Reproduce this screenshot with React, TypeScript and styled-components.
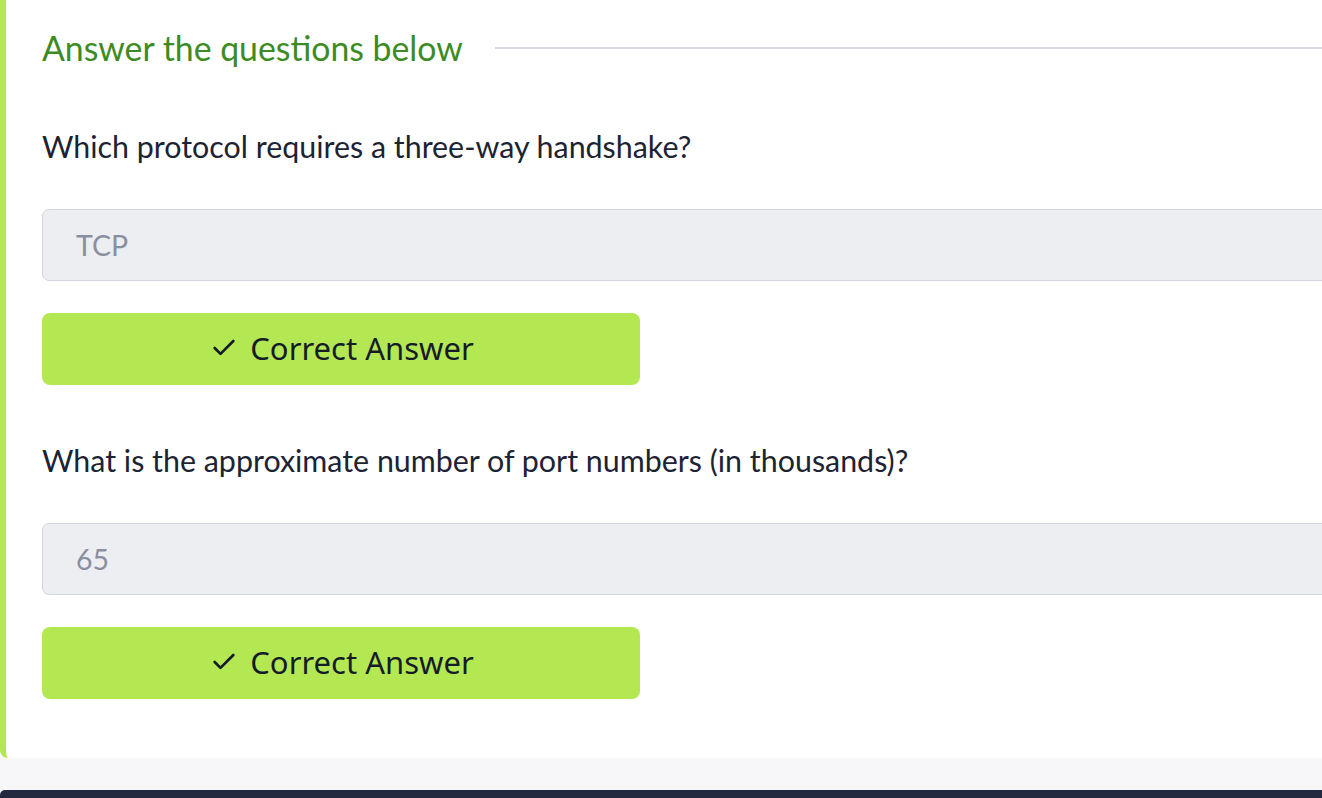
import React from "react";
import styled, { createGlobalStyle } from "styled-components";

const Global = createGlobalStyle`
  html, body { margin: 0; padding: 0; background: #f7f7f9; }
  body { font-family: "Lato", "Liberation Sans", sans-serif; overflow: hidden; }
  * { box-sizing: border-box; }
`;

const Page = styled.div`
  width: 1322px;
  height: 798px;
  display: flex;
  flex-direction: column;
  background: #f7f7f9;
  overflow: hidden;
`;

const Card = styled.section`
  background: #ffffff;
  border-left: 6px solid #b3e852;
  border-bottom-left-radius: 8px;
  padding: 24px 0 59px 36px;
  width: 1400px;
  display: flex;
  flex-direction: column;
`;

const HeadingRow = styled.div`
  display: flex;
  align-items: center;
  gap: 32px;
  height: 48px;
`;

const Heading = styled.h2`
  margin: 0;
  font-family: "Lato", sans-serif;
  font-weight: 400;
  font-size: 33.8px;
  line-height: 48px;
  color: #3d8b22;
  white-space: nowrap;
`;

const Rule = styled.div`
  flex: 1;
  height: 2px;
  background: #d8dae0;
`;

const Question = styled.div<{ $first?: boolean }>`
  margin-top: ${(p) => (p.$first ? 54 : 55)}px;
  font-family: "Lato", sans-serif;
  font-size: 30.4px;
  line-height: 40px;
  color: #1c2333;
  white-space: nowrap;
`;

const AnswerInput = styled.div`
  margin-top: 43px;
  height: 72px;
  background: #edeef2;
  border: 1.5px solid #d3d5dc;
  border-radius: 7px;
  padding-left: 33px;
  display: flex;
  align-items: center;
  font-family: "Lato", sans-serif;
  font-size: 28.5px;
  color: #8a8f9f;
`;

const Button = styled.button`
  margin-top: 32px;
  width: 598px;
  height: 72px;
  border: none;
  border-radius: 8px;
  background: #b3e852;
  display: flex;
  align-items: center;
  justify-content: center;
  gap: 12px;
  font-family: "Noto Sans", "Open Sans", sans-serif;
  font-size: 31px;
  color: #151b28;
  padding: 0 0 2px 2px;
  cursor: pointer;
`;

const Spacer = styled.div`
  height: 32px;
`;

const Footer = styled.footer`
  flex: 1;
  background: #232a3f;
  border-top-left-radius: 5px;
`;

const Check = () => (
  <svg width="28" height="28" viewBox="0 0 24 24" fill="none" stroke="#151b28" strokeWidth="2.3" strokeLinecap="round" strokeLinejoin="round">
    <path d="M20 6 9 17l-5-5" />
  </svg>
);

const items = [
  { q: "Which protocol requires a three-way handshake?", a: "TCP" },
  { q: "What is the approximate number of port numbers (in thousands)?", a: "65" },
];

export default function App() {
  return (
    <Page>
      <Global />
      <Card>
        <HeadingRow>
          <Heading>Answer the questions below</Heading>
          <Rule />
        </HeadingRow>
        {items.map((it, i) => (
          <React.Fragment key={i}>
            <Question $first={i === 0}>{it.q}</Question>
            <AnswerInput>{it.a}</AnswerInput>
            <Button>
              <Check />
              Correct Answer
            </Button>
          </React.Fragment>
        ))}
      </Card>
      <Spacer />
      <Footer />
    </Page>
  );
}
